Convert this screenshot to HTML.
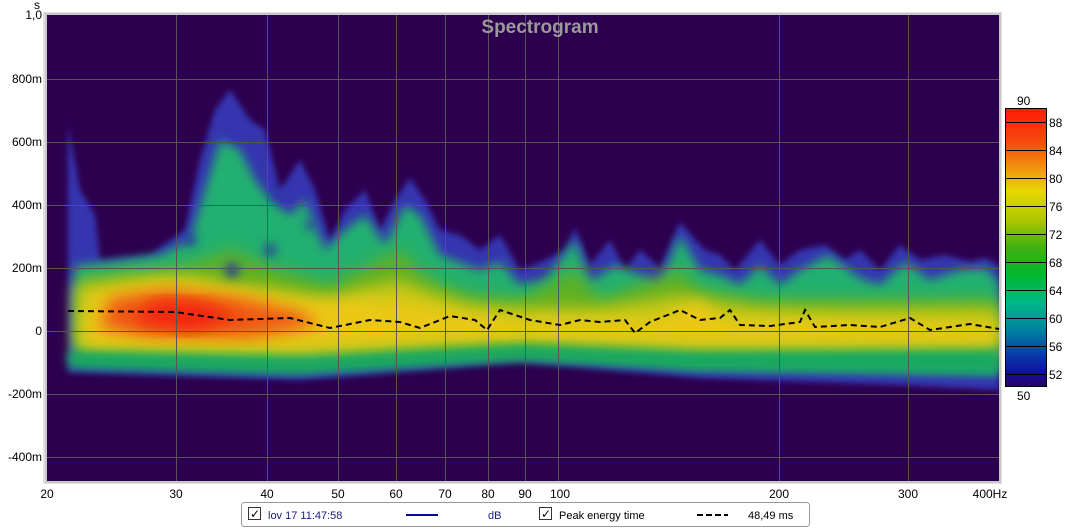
<!DOCTYPE html><html><head><style>
body{margin:0;background:#fff;width:1081px;height:529px;overflow:hidden;font-family:"Liberation Sans",sans-serif;}
</style></head><body>
<svg width="1081" height="529" style="position:absolute;left:0;top:0" font-family="Liberation Sans, sans-serif" font-size="12">
<defs>
<clipPath id="c"><rect x="47" y="15" width="952" height="466"/></clipPath>
<filter id="b0" x="-20%" y="-20%" width="140%" height="140%"><feGaussianBlur stdDeviation="3"/></filter>
<filter id="b1" x="-20%" y="-20%" width="140%" height="140%"><feGaussianBlur stdDeviation="5"/></filter>
<filter id="b2" x="-20%" y="-20%" width="140%" height="140%"><feGaussianBlur stdDeviation="8"/></filter>
<linearGradient id="cb" x1="0" y1="0" x2="0" y2="1">
<stop offset="0" stop-color="#ff1a08"/><stop offset="0.12" stop-color="#f44a0c"/><stop offset="0.25" stop-color="#f0b010"/><stop offset="0.3" stop-color="#e6d800"/><stop offset="0.4" stop-color="#b0c800"/><stop offset="0.5" stop-color="#40b010"/><stop offset="0.6" stop-color="#00b830"/><stop offset="0.7" stop-color="#00b888"/><stop offset="0.8" stop-color="#0080a0"/><stop offset="0.88" stop-color="#0840a8"/><stop offset="0.95" stop-color="#1010a0"/><stop offset="1" stop-color="#2a0060"/></linearGradient>
</defs>
<rect x="43" y="12" width="959" height="472" fill="#e0e0e0"/>
<rect x="45" y="13" width="956" height="470" fill="#c8c8c8"/>
<rect x="47" y="15" width="952" height="466" fill="#2d004f"/>
<g clip-path="url(#c)">
<path filter="url(#b0)" fill="#3636b0" d="M68 370 L68 125 L80 190 L95 215 L100 260 L150 255 L185 230 L200 160 L215 110 L230 90 L250 120 L265 130 L280 190 L300 160 L315 190 L330 240 L345 210 L365 190 L380 230 L395 200 L410 178 L425 200 L440 230 L460 235 L480 250 L500 235 L520 270 L545 260 L565 250 L575 228 L590 265 L610 240 L625 270 L640 250 L660 268 L680 222 L695 240 L705 250 L720 255 L735 270 L760 240 L780 265 L800 250 L825 245 L845 260 L860 250 L880 270 L900 245 L920 260 L945 255 L970 262 L985 258 L999 265 L999 390 L900 385 L700 378 L520 362 L300 380 L68 372 Z"/>
<path filter="url(#b1)" fill="#20b070" d="M75 360 L75 265 L110 262 L160 255 L190 240 L205 190 L220 140 L240 150 L255 180 L270 200 L290 215 L305 200 L325 250 L345 230 L365 215 L385 245 L405 205 L420 215 L440 255 L480 270 L500 262 L520 285 L545 280 L575 240 L590 282 L615 265 L640 275 L660 285 L680 235 L700 270 L720 275 L740 285 L760 265 L780 285 L800 270 L828 255 L860 278 L880 285 L905 262 L930 280 L960 270 L985 268 L999 282 L999 375 L700 368 L520 355 L300 370 L75 362 Z"/>
<path filter="url(#b2)" fill="#60b020" d="M80 340 L80 280 L180 268 L230 250 L280 270 L330 285 L400 250 L430 280 L470 295 L520 300 L575 270 L600 300 L680 270 L700 290 L760 300 L850 300 L999 300 L999 350 L80 350 Z"/>
<path filter="url(#b2)" fill="#c8c818" d="M75 350 L75 285 L130 278 L190 275 L230 285 L280 290 L330 300 L360 288 L400 280 L430 292 L470 305 L520 308 L600 308 L680 295 L700 300 L760 308 L850 310 L999 308 L999 355 L700 355 L520 345 L300 358 L75 352 Z"/>
<path filter="url(#b2)" fill="#ecc818" d="M85 340 L90 295 L160 282 L240 290 L300 300 L360 300 L420 305 L470 315 L520 320 L660 320 L700 300 L720 320 L999 325 L999 340 L700 340 L520 335 L300 345 L85 345 Z"/>
<path filter="url(#b2)" fill="#f05a14" d="M100 328 L110 298 L170 290 L240 298 L300 312 L320 325 L250 338 L150 336 Z"/>
<path filter="url(#b2)" fill="#f2280e" d="M130 322 L155 300 L205 302 L240 318 L190 332 Z"/>
<path filter="url(#b1)" fill="#18a860" d="M68 352 L300 358 L520 345 L700 352 L999 350 L999 372 L700 370 L520 360 L300 374 L68 368 Z"/>
<g fill="#2a38a0" filter="url(#b1)"><circle cx="232" cy="270" r="7"/><circle cx="190" cy="240" r="6"/><circle cx="270" cy="250" r="6"/><circle cx="280" cy="195" r="5"/><circle cx="310" cy="225" r="5"/></g>
</g>
<g stroke="#555" stroke-width="1">
<line x1="47" y1="79.5" x2="999" y2="79.5"/><line x1="47" y1="142.5" x2="999" y2="142.5"/><line x1="47" y1="205.5" x2="999" y2="205.5"/><line x1="47" y1="268.5" x2="999" y2="268.5"/><line x1="47" y1="331.5" x2="999" y2="331.5"/><line x1="47" y1="394.5" x2="999" y2="394.5"/><line x1="47" y1="457.5" x2="999" y2="457.5"/>
<line x1="176.5" y1="15" x2="176.5" y2="481"/><line x1="267.5" y1="15" x2="267.5" y2="481"/><line x1="338.5" y1="15" x2="338.5" y2="481"/><line x1="396.5" y1="15" x2="396.5" y2="481"/><line x1="445.5" y1="15" x2="445.5" y2="481"/><line x1="488.5" y1="15" x2="488.5" y2="481"/><line x1="525.5" y1="15" x2="525.5" y2="481"/><line x1="558.5" y1="15" x2="558.5" y2="481"/><line x1="779.5" y1="15" x2="779.5" y2="481"/><line x1="908.5" y1="15" x2="908.5" y2="481"/>
</g>
<polyline fill="none" stroke="#000" stroke-width="2" stroke-dasharray="6,4" points="68,311 175,312 230,320 290,318 330,328 370,320 400,322 420,328 450,316 475,320 487,330 500,310 530,320 560,325 580,320 600,322 625,320 635,333 650,322 680,310 700,320 720,318 730,310 740,325 770,326 800,322 805,310 815,327 850,325 880,327 910,318 930,330 970,324 999,329"/>
<text x="540" y="33" text-anchor="middle" font-size="19" font-weight="bold" fill="#9a9a9a">Spectrogram</text>
<g text-anchor="end"><text x="42" y="19">1,0</text><text x="42" y="83">800m</text><text x="42" y="146">600m</text><text x="42" y="209">400m</text><text x="42" y="272">200m</text><text x="42" y="335">0</text><text x="42" y="398">-200m</text><text x="42" y="461">-400m</text></g>
<text x="37" y="9" text-anchor="middle">s</text>
<g text-anchor="middle"><text x="47" y="498">20</text><text x="176" y="498">30</text><text x="267" y="498">40</text><text x="338" y="498">50</text><text x="396" y="498">60</text><text x="445" y="498">70</text><text x="488" y="498">80</text><text x="525" y="498">90</text><text x="560" y="498">100</text><text x="779" y="498">200</text><text x="908" y="498">300</text><text x="990" y="498">400Hz</text></g>
<rect x="1005.5" y="108.5" width="41" height="278" fill="url(#cb)" stroke="#000"/>
<g stroke="#000"><line x1="1005" y1="122.5" x2="1046" y2="122.5"/><line x1="1005" y1="150.5" x2="1046" y2="150.5"/><line x1="1005" y1="178.5" x2="1046" y2="178.5"/><line x1="1005" y1="206.5" x2="1046" y2="206.5"/><line x1="1005" y1="234.5" x2="1046" y2="234.5"/><line x1="1005" y1="262.5" x2="1046" y2="262.5"/><line x1="1005" y1="290.5" x2="1046" y2="290.5"/><line x1="1005" y1="318.5" x2="1046" y2="318.5"/><line x1="1005" y1="346.5" x2="1046" y2="346.5"/><line x1="1005" y1="374.5" x2="1046" y2="374.5"/></g>
<g><text x="1017" y="105">90</text><text x="1017" y="400">50</text><text x="1049" y="127">88</text><text x="1049" y="155">84</text><text x="1049" y="183">80</text><text x="1049" y="211">76</text><text x="1049" y="239">72</text><text x="1049" y="267">68</text><text x="1049" y="295">64</text><text x="1049" y="323">60</text><text x="1049" y="351">56</text><text x="1049" y="379">52</text></g>
<rect x="241.5" y="502.5" width="568" height="24" rx="3" fill="#fff" stroke="#999"/>
<rect x="248.5" y="507.5" width="12" height="12" fill="#fff" stroke="#333"/><text x="250" y="518" font-size="12">✓</text>
<text x="268" y="519" fill="#1a1a80" font-size="11">lov 17 11:47:58</text>
<line x1="406" y1="515" x2="438" y2="515" stroke="#0a0a90" stroke-width="2"/>
<text x="488" y="519" fill="#1a1a80" font-size="11">dB</text>
<rect x="539.5" y="507.5" width="12" height="12" fill="#fff" stroke="#333"/><text x="541" y="518" font-size="12">✓</text>
<text x="559" y="519" font-size="11">Peak energy time</text>
<line x1="697" y1="515" x2="728" y2="515" stroke="#000" stroke-width="2" stroke-dasharray="6,3"/>
<text x="748" y="519" font-size="11">48,49 ms</text>
</svg>
</body></html>
